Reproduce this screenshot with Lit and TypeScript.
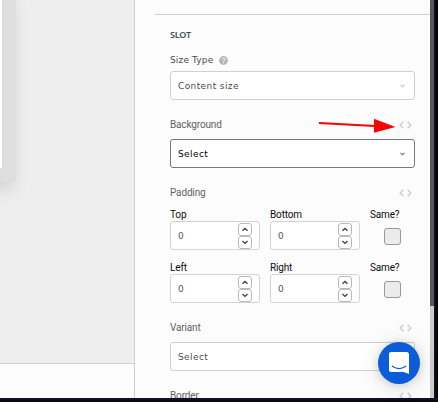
import { LitElement, html, css, svg } from "lit";
import { customElement, property } from "lit/decorators.js";

const chevron = (up = false) => html`<svg width="6" height="5" viewBox="0 0 6 5" fill="none" stroke="currentColor" stroke-width="1.4">
  ${up ? svg`<path d="M.5 3.7 3 1.4l2.5 2.3"/>` : svg`<path d="M.5 1.1 3 3.4l2.5-2.3"/>`}
</svg>`;

@customElement("field-label")
class FieldLabel extends LitElement {
  @property() text = "";
  static styles = css`
    :host { display: flex; justify-content: space-between; align-items: center; height: 16px; color: #626266; font: 10px/16px Roboto, sans-serif; letter-spacing: -0.15px; }
    svg { margin-right: 3px; }
  `;
  render() {
    return html`<span>${this.text}</span>
      <svg width="13" height="8" viewBox="0 0 13 8" fill="none" stroke="#cfcfd1" stroke-width="1.5"><path d="M4.3.8 1.2 4l3.1 3.2M8.7.8 11.8 4 8.7 7.2"/></svg>`;
  }
}

@customElement("select-box")
class SelectBox extends LitElement {
  @property() value = "";
  @property({ type: Boolean, reflect: true }) active = false;
  static styles = css`
    :host { display: flex; box-sizing: border-box; height: 29px; padding: 0 9px 0 7px; align-items: center; justify-content: space-between; border: 1px solid #d0d0d0; border-radius: 3px; background: #fff; color: #4c4c50; font: 9px/16px "DejaVu Sans", sans-serif; letter-spacing: 0.4px; }
    :host([active]) { border-color: #77777a; color: #000004; }
    svg { width: 5px; height: 4px; color: #c4c4c6; }
    :host([active]) svg { color: #77777a; }
  `;
  render() {
    return html`<span>${this.value}</span>${chevron()}`;
  }
}

@customElement("number-box")
class NumberBox extends LitElement {
  @property() label = "";
  static styles = css`
    :host { display: block; width: 90px; }
    .label { height: 12px; font: 10px/12px Roboto, sans-serif; letter-spacing: -0.15px; color: #0c0c10; }
    .box { display: flex; box-sizing: border-box; height: 29px; padding: 1px 7px 0 7px; justify-content: space-between; border: 1px solid #d3d3d3; border-radius: 3px; background: #fff; font: 9px/27px "DejaVu Sans", sans-serif; color: #56565a; }
    .steps { display: flex; flex-direction: column; }
    .step { display: flex; box-sizing: border-box; width: 14px; height: 13px; align-items: center; justify-content: center; border: 1px solid #b9b9b9; border-radius: 3px; color: #404044; }
  `;
  render() {
    return html`<div class="label">${this.label}</div>
      <div class="box"><span>0</span><div class="steps"><div class="step">${chevron(true)}</div><div class="step">${chevron()}</div></div></div>`;
  }
}

@customElement("app-root")
class AppRoot extends LitElement {
  static styles = css`
    :host { display: flex; position: relative; box-sizing: border-box; width: 438px; height: 402px; overflow: hidden; background: #080810; }
    .left { width: 134px; height: 398px; background: #fcfcfc; }
    .canvas { height: 363px; overflow: hidden; background: #eee; border-bottom: 1px solid #d0d0d0; }
    .frame { box-sizing: border-box; width: 16px; height: 182px; border: solid #dedede; border-width: 0 14px 14px 0; background: #fff; box-shadow: -8px 5px 20px rgba(0, 0, 0, .24); }
    .panel { box-sizing: border-box; width: 296px; height: 398px; padding-top: 14px; border-left: 1px solid #d0d0d0; background: #fcfcfc; overflow: hidden; }
    .rule { margin-left: 20px; height: 1px; background: #d0d0d0; }
    .content { width: 245px; margin-left: 35px; }
    .heading { margin-top: 12px; font: 600 9px/16px "Noto Sans", sans-serif; letter-spacing: -0.2px; color: #4c4c54; }
    .size { display: flex; align-items: center; gap: 6px; height: 16px; margin: 9px 0 3px; color: #4c4c50; font: 9px/16px "DejaVu Sans", sans-serif; letter-spacing: 0.15px; }
    field-label { margin: 17px 0 6px; }
    .numbers { display: flex; gap: 10px; margin-top: 8px; }
    .numbers + .numbers { margin-top: 12px; }
    .same { height: 41px; font: 10px/12px Roboto, sans-serif; letter-spacing: -0.15px; color: #0c0c10; }
    .check { box-sizing: border-box; width: 17px; height: 17px; margin: 7px 0 0 14px; border: 1px solid #999; border-radius: 3px; background: #ebebeb; }
    .scroll { width: 4px; height: 398px; background: #ccc; }
    .thumb { height: 306px; background: #57575a; }
    .edge { width: 4px; height: 398px; background: #101020; border-right: 2px solid #020208; box-sizing: border-box; }
    .floor { position: absolute; left: 0; bottom: 0; width: 438px; height: 4px; background: #080810; border-top: 2px solid #111122; box-sizing: border-box; }
    .arrow { position: absolute; left: 318px; top: 118px; }
    .chat { position: absolute; left: 378px; top: 342px; width: 42px; height: 42px; border-radius: 50%; background: #0b5cd7; box-shadow: 0 1px 8px rgba(0, 0, 0, .14), 0 2px 22px rgba(0, 0, 0, .12); }
  `;
  render() {
    const row = (a: string, b: string) => html`<div class="numbers">
      <number-box label=${a}></number-box><number-box label=${b}></number-box>
      <div class="same">Same?<div class="check"></div></div>
    </div>`;
    return html`
      <div class="left"><div class="canvas"><div class="frame"></div></div></div>
      <div class="panel">
        <div class="rule"></div>
        <div class="content">
          <div class="heading">SLOT</div>
          <div class="size"><span>Size Type</span>
            <svg width="9" height="9" viewBox="0 0 9 9"><circle cx="4.5" cy="4.5" r="4.4" fill="#b5b5b7"/><path d="M3.1 3.5c0-2 2.9-1.9 2.9-.2 0 1-1.4 1-1.4 2.2M4.6 6.3v1.1" fill="none" stroke="#fff"/></svg>
          </div>
          <select-box value="Content size"></select-box>
          <field-label text="Background"></field-label>
          <select-box value="Select" active></select-box>
          <field-label text="Padding"></field-label>
          ${row("Top", "Bottom")}${row("Left", "Right")}
          <field-label text="Variant"></field-label>
          <select-box value="Select"></select-box>
          <field-label text="Border"></field-label>
        </div>
      </div>
      <div class="scroll"><div class="thumb"></div></div>
      <div class="edge"></div>
      <div class="floor"></div>
      <svg class="arrow" width="79" height="16" viewBox="0 0 79 16"><path d="M1 5 57 8" stroke="#f00" stroke-width="2"/><path d="M56 .7 77.5 9 56 14.7z" fill="#f00"/></svg>
      <div class="chat"><svg width="42" height="42" viewBox="0 0 42 42"><path d="M13 10h15.5q2.500 0 2.500 2.500V32l-5.500-2H13q-2 0-2-2V12q0-2 2-2z" fill="#fff"/><path d="M14.300 24.300q6.700 4.700 13.400 0" fill="none" stroke="#0b5cd7" stroke-width="1.400" stroke-linecap="round"/></svg></div>
    `;
  }
}
